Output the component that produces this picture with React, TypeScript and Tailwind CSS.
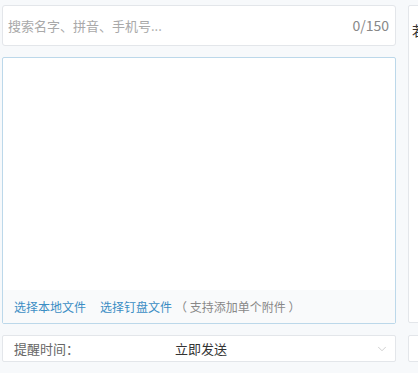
import { ChevronDown } from 'lucide-react'

const font = { fontFamily: '"Noto Sans CJK SC", "Noto Sans", sans-serif' }

export default function App() {
  return (
    <div className="w-[418px] h-[373px] overflow-hidden bg-[#f7f9fb] flex gap-[12px] pt-[5px] pl-[2px]" style={font}>
      {/* left column */}
      <div className="w-[394px] shrink-0 flex flex-col">
        <div className="h-[41px] bg-white border border-[#e3e6ea] rounded-[3px] flex items-center justify-between pl-[5px] pr-[6px]">
          <span className="text-[13px] text-[#a9a9a9]">搜索名字、拼音、手机号...</span>
          <span className="text-[14px] text-[#888]">0/150</span>
        </div>

        <div className="mt-[11px] h-[267px] bg-white border border-[#bcd8ea] rounded-[2px] flex flex-col">
          <div className="flex-1" />
          <div className="h-[33px] bg-[#f9fafb] flex items-center pl-[11px] text-[12px]">
            <span className="text-[#3b8dc4]">选择本地文件</span>
            <span className="text-[#3b8dc4] ml-[14px]">选择钉盘文件</span>
            <span className="text-[#888] ml-[3px]">（ 支持添加单个附件 ）</span>
          </div>
        </div>

        <div className="mt-[11px] h-[27px] bg-white border border-[#e3e6ea] rounded-[2px] flex items-center pl-[11px] pr-[6px] text-[13px]">
          <span className="w-[150px] text-[#666]">提醒时间：</span>
          <span className="flex-1 text-[#333] pl-[11px]">立即发送</span>
          <ChevronDown className="w-[14px] h-[14px] text-[#bbb]" strokeWidth={1.2} />
        </div>
      </div>

      {/* right column */}
      <div className="w-[200px] shrink-0 flex flex-col">
        <div className="h-[318px] bg-white border border-[#e3e6ea] rounded-[2px] pt-[11px] pl-[3px]">
          <span className="text-[14px] text-[#333]">若</span>
        </div>
        <div className="mt-[12px] h-[27px] bg-white border border-[#e3e6ea] rounded-[2px]" />
      </div>
    </div>
  )
}
